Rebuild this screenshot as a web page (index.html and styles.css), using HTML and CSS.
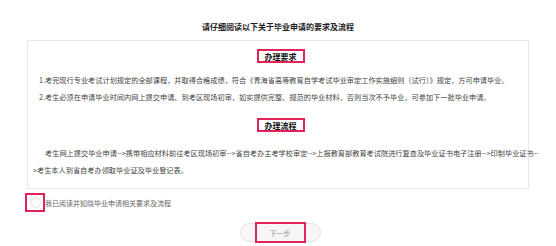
FILE: index.html
```html
<!DOCTYPE html>
<html lang="zh">
<head>
<meta charset="utf-8">
<link rel="stylesheet" href="styles.css">
</head>
<body>
<div class="page">
  <h1 class="title">请仔细阅读以下关于毕业申请的要求及流程</h1>
  <div class="box">
    <div class="heading"><span class="mark">办理要求</span></div>
    <div class="reqs">
      <p>1.考完现行专业考试计划规定的全部课程，并取得合格成绩，符合《青海省高等教育自学考试毕业审定工作实施细则（试行）》规定，方可申请毕业。</p>
      <p>2.考生必须在申请毕业时间内网上提交申请、到考区现场初审，如实提供完整、规范的毕业材料，否则当次不予毕业，可参加下一批毕业申请。</p>
    </div>
    <div class="heading heading2"><span class="mark">办理流程</span></div>
    <p class="flow">考生网上提交毕业申请--&gt;携带相应材料前往考区现场初审--&gt;省自考办主考学校审定--&gt;上报教育部教育考试院进行复查及毕业证书电子注册--&gt;印制毕业证书--<br>&gt;考生本人到省自考办领取毕业证及毕业登记表。</p>
  </div>
  <label class="agree">
    <span class="check-mark"><span class="circle"></span></span>
    <span class="agree-text">我已阅读并知晓毕业申请相关要求及流程</span>
  </label>
  <div class="actions">
    <button class="next"><span class="next-mark">下一步</span></button>
  </div>
</div>
</body>
</html>
```

FILE: styles.css
```css
* { box-sizing: border-box; }
html, body { margin: 0; padding: 0; background: #fff; }
body {
  width: 556px;
  height: 246px;
  overflow: hidden;
  font-family: "Noto Sans CJK SC", "Noto Sans", sans-serif;
  color: #333;
}
.page { padding-top: 22px; }
.title {
  margin: 0;
  font-size: 8px;
  line-height: 10px;
  font-weight: bold;
  text-align: center;
  color: #222;
}
.box {
  margin: 8px 27px 0 27px;
  border: 1px solid #e8e8e8;
  padding: 8px 0 9px 5px;
}
.heading {
  display: flex;
  justify-content: center;
}
.mark {
  display: inline-flex;
  align-items: center;
  height: 14px;
  padding: 0 6px;
  border: 2px solid #e0245a;
  font-size: 8px;
  font-weight: bold;
  color: #111;
}
.reqs {
  margin-top: 9px;
  padding-left: 6px;
}
.reqs p, .flow {
  margin: 0;
  font-size: 7.2px;
  line-height: 17px;
  color: #444;
  white-space: nowrap;
}
.heading2 { margin-top: 12px; }
.flow {
  margin-top: 13px;
  text-indent: 12px;
}
.agree {
  display: flex;
  align-items: center;
  margin: 4px 0 0 25px;
  height: 19px;
}
.check-mark {
  display: flex;
  align-items: center;
  justify-content: center;
  width: 20px;
  height: 19px;
  border: 2px solid #e0245a;
}
.circle {
  width: 11px;
  height: 11px;
  border-radius: 50%;
  border: 1px solid #e2e2e2;
  background: #fafafa;
}
.agree-text {
  font-size: 7px;
  color: #666;
}
.actions {
  display: flex;
  justify-content: center;
  margin-top: 11px;
  padding-left: 4px;
}
.next {
  display: flex;
  justify-content: center;
  align-items: center;
  width: 81px;
  height: 19px;
  padding: 0;
  border: 1px solid #e3e3e3;
  border-radius: 10px;
  background: #f6f6f6;
  font-family: inherit;
}
.next-mark {
  display: flex;
  align-items: center;
  justify-content: center;
  width: 51px;
  height: 21px;
  border: 2px solid #e0245a;
  font-size: 7px;
  color: #999;
}
```
